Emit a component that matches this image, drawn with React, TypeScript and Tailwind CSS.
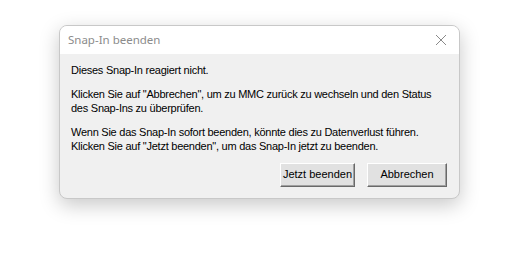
export default function App() {
  return (
    <div className="min-h-[263px] w-[532px] bg-white pl-[59px] pt-[25px]">
      <div
        className="flex w-[401px] flex-col overflow-hidden rounded-[8px] border border-[#c8c8c8] bg-[#f0f0f0] shadow-[0_6px_20px_rgba(0,0,0,0.22)]"
        style={{ fontFamily: '"Liberation Sans", Arial, sans-serif' }}
      >
        {/* title bar */}
        <div className="flex h-[28px] items-center justify-between bg-white pl-[8px] pr-[10px]">
          <span
            className="text-[11.5px] text-[#8c8c8c]"
            style={{ fontFamily: '"Noto Sans", "Open Sans", sans-serif' }}
          >
            Snap-In beenden
          </span>
          <svg width="12" height="12" viewBox="0 0 12 12" className="mr-[2px]">
            <path d="M1 1 L11 11 M11 1 L1 11" stroke="#8a8a8a" strokeWidth="1" fill="none" />
          </svg>
        </div>

        {/* body */}
        <div className="flex flex-col whitespace-nowrap px-[11px] pb-[11px] pt-[9px] text-[11px] leading-[14.5px] tracking-[-0.25px] text-black">
          <p>Dieses Snap-In reagiert nicht.</p>
          <p className="mt-[9px]">
            Klicken Sie auf "Abbrechen", um zu MMC zurück zu wechseln und den Status
            <br />
            des Snap-Ins zu überprüfen.
          </p>
          <p className="mt-[9px]">
            Wenn Sie das Snap-In sofort beenden, könnte dies zu Datenverlust führen.
            <br />
            Klicken Sie auf "Jetzt beenden", um das Snap-In jetzt zu beenden.
          </p>

          <div className="mt-[9px] flex justify-end gap-[12px] pr-[1px] tracking-normal">
            <button className="h-[24px] w-[75px] border border-b-[#696969] border-l-white border-r-[#696969] border-t-white bg-[#e1e1e1] text-[11px] text-black shadow-[inset_-1px_-1px_0_#a0a0a0]">
              Jetzt beenden
            </button>
            <button className="h-[24px] w-[80px] border border-b-[#696969] border-l-white border-r-[#696969] border-t-white bg-[#e1e1e1] text-[11px] text-black shadow-[inset_-1px_-1px_0_#a0a0a0]">
              Abbrechen
            </button>
          </div>
        </div>
      </div>
    </div>
  )
}
